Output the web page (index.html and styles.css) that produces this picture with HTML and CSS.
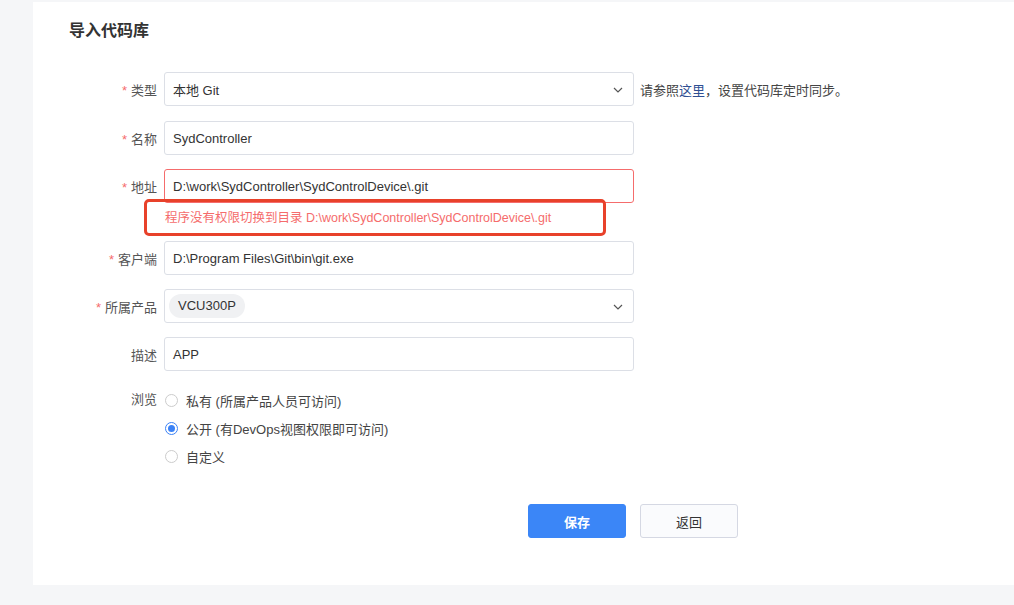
FILE: index.html
```html
<!DOCTYPE html>
<html lang="zh">
<head>
  <meta charset="UTF-8" />
  <title>导入代码库</title>
  <link rel="stylesheet" href="styles.css">
</head>
<body>

<main class="panel">
  <h2 class="titulo">导入代码库</h2>

  <form class="formulario">
    <div class="fila primera">
      <label class="etiqueta"><span class="req">*</span>类型</label>
      <div class="campo">
        <div class="caja select">本地 Git
          <svg class="flecha" viewBox="0 0 10 6" width="10" height="6"><path d="M1 1l4 4 4-4" fill="none" stroke="#555" stroke-width="1.2"/></svg>
        </div>
      </div>
      <span class="ayuda">请参照<a href="#">这里</a>，设置代码库定时同步。</span>
    </div>

    <div class="fila">
      <label class="etiqueta"><span class="req">*</span>名称</label>
      <div class="campo"><div class="caja">SydController</div></div>
    </div>

    <div class="fila con-error">
      <label class="etiqueta"><span class="req">*</span>地址</label>
      <div class="campo">
        <div class="caja error">D:\work\SydController\SydControlDevice\.git</div>
        <div class="mensaje">程序没有权限切换到目录 D:\work\SydController\SydControlDevice\.git</div>
        <div class="marca"></div>
      </div>
    </div>

    <div class="fila">
      <label class="etiqueta"><span class="req">*</span>客户端</label>
      <div class="campo"><div class="caja">D:\Program Files\Git\bin\git.exe</div></div>
    </div>

    <div class="fila">
      <label class="etiqueta"><span class="req">*</span>所属产品</label>
      <div class="campo">
        <div class="caja select"><span class="chip">VCU300P</span>
          <svg class="flecha" viewBox="0 0 10 6" width="10" height="6"><path d="M1 1l4 4 4-4" fill="none" stroke="#555" stroke-width="1.2"/></svg>
        </div>
      </div>
    </div>

    <div class="fila">
      <label class="etiqueta">描述</label>
      <div class="campo"><div class="caja">APP</div></div>
    </div>

    <div class="fila radios">
      <label class="etiqueta">浏览</label>
      <div class="opciones">
        <div class="opcion"><span class="circulo"></span>私有 (所属产品人员可访问)</div>
        <div class="opcion"><span class="circulo activo"></span>公开 (有DevOps视图权限即可访问)</div>
        <div class="opcion"><span class="circulo"></span>自定义</div>
      </div>
    </div>

    <div class="acciones">
      <button type="button" class="btn primario">保存</button>
      <button type="button" class="btn">返回</button>
    </div>
  </form>
</main>

</body>
</html>
```

FILE: styles.css
```css
* { box-sizing: border-box; }

body {
  margin: 0;
  background: #f5f6f8;
  font-family: "Liberation Sans", "Noto Sans CJK SC", sans-serif;
  color: #333;
  font-size: 13px;
}

.panel {
  margin: 2px 0 0 33px;
  height: 583px;
  background: #fff;
  padding: 16px 36px;
}

.titulo {
  margin: 0;
  font-size: 16px;
  font-weight: bold;
  color: #333;
  line-height: 26px;
}

.formulario {
  margin-top: 28px;
}

.fila {
  display: flex;
  align-items: center;
  margin-bottom: 14px;
}

.fila.primera {
  margin-bottom: 15px;
}

.fila.con-error {
  margin-bottom: 38px;
}

.etiqueta {
  width: 95px;
  text-align: right;
  padding-right: 7px;
  color: #555;
  flex-shrink: 0;
}

.req {
  color: #f56c6c;
  margin-right: 4px;
}

.campo {
  position: relative;
  width: 470px;
}

.caja {
  height: 34px;
  border: 1px solid #dcdfe6;
  border-radius: 3px;
  padding: 0 8px;
  display: flex;
  align-items: center;
  color: #333;
}

.caja.error {
  border-color: #f56c6c;
}

.select {
  position: relative;
}

.flecha {
  position: absolute;
  right: 10px;
  top: 14px;
}

.chip {
  background: #f0f1f3;
  border-radius: 12px;
  padding: 3px 9px;
  line-height: 18px;
  margin-left: -4px;
}

.ayuda {
  margin-left: 6px;
  color: #444;
}

.ayuda a {
  color: #2f4f93;
  text-decoration: none;
}

.mensaje {
  position: absolute;
  left: 1px;
  top: 38px;
  color: #f56c6c;
  font-size: 12.5px;
  white-space: nowrap;
}

.marca {
  position: absolute;
  left: -20px;
  top: 30px;
  width: 462px;
  height: 37px;
  border: 3px solid #e8412a;
  border-radius: 5px;
}

.radios {
  align-items: flex-start;
  margin-top: 20px;
}

.radios .etiqueta {
  line-height: 18px;
}

.opcion {
  display: flex;
  align-items: center;
  height: 18px;
  margin-bottom: 10px;
  color: #444;
}

.circulo {
  width: 13px;
  height: 13px;
  border: 1px solid #ccc;
  border-radius: 50%;
  margin: 0 8px 0 1px;
  position: relative;
}

.circulo.activo {
  border-color: #3b82f6;
}

.circulo.activo::after {
  content: "";
  position: absolute;
  left: 2px;
  top: 2px;
  width: 7px;
  height: 7px;
  border-radius: 50%;
  background: #3b82f6;
}

.acciones {
  display: flex;
  gap: 14px;
  margin: 29px 0 0 459px;
}

.btn {
  width: 98px;
  height: 34px;
  border: 1px solid #d5d8e3;
  border-radius: 3px;
  background: #fafbfd;
  color: #333;
  font-family: inherit;
  font-size: 13px;
}

.btn.primario {
  background: #3b86f7;
  border-color: #3b86f7;
  color: #fff;
  font-weight: bold;
}
```
